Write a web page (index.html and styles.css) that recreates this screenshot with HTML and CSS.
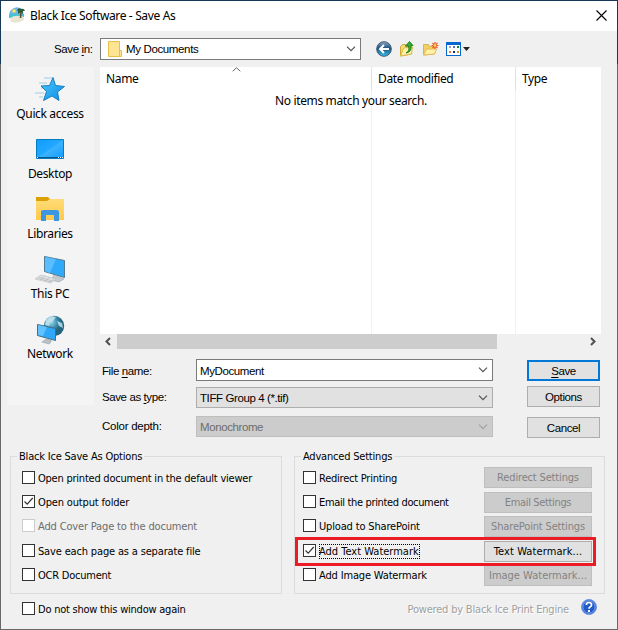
FILE: index.html
```html
<!DOCTYPE html>
<html lang="en">
<head>
<meta charset="utf-8">
<title>Black Ice Software - Save As</title>
<link rel="stylesheet" href="styles.css">
</head>
<body>
<div class="window">
  <header class="titlebar">
    <svg class="app-icon" width="16" height="16" viewBox="0 0 16 16"><path d="M2 3Q7-2 13 2l2 6H0Q0 5 2 3Z" fill="#6fb4ea"/><path d="M0 7h15v4H0Z" fill="#45c3d0"/><path d="M1 11Q7 7 15 10v3Q9 17 2 15Z" fill="#e8e5d0"/><circle cx="5" cy="4" r="1.800" fill="#f5ee4c"/><path d="M12 4l-.5 7" stroke="#604b2a" stroke-width="1.500"/><path d="M8 3Q10 0 12 2q3-1 4 2l-2 0 0 3-2-2-3 2V4Z" fill="#285d38"/></svg>
    <h1 class="title">Black Ice Software - Save As</h1>
    <svg class="close" width="11" height="11" viewBox="0 0 11 11"><path d="M.5.5l10 10M10.500.5l-10 10" stroke="#000" stroke-width="1.1"/></svg>
  </header>

  <div class="lookin">
    <label class="lookin-label"><span>Save <u>i</u>n:</span></label>
    <div class="combo combo-path">
      <svg width="14" height="16" viewBox="0 0 14 16"><path d="M.5.5h11v9h2v6H.5Z" fill="#ffe494" stroke="#e8c046"/><path d="M11.500 9.500v6" stroke="#e8c046"/></svg>
      <span>My Documents</span>
      <svg class="chev" width="10" height="6" viewBox="0 0 10 6"><path d="M1 .7l4 4 4-4" fill="none" stroke="#505050" stroke-width="1.1"/></svg>
    </div>
    <div class="tools">
      <svg width="16" height="16" viewBox="0 0 16 16"><defs><linearGradient id="bk" x2="0" y2="1"><stop stop-color="#8fa9c0"/><stop offset=".45" stop-color="#1d4f7e"/><stop offset="1" stop-color="#35c0ee"/></linearGradient></defs><circle cx="8" cy="8" r="7.300" fill="url(#bk)" stroke="#3c5974"/><path d="M13 8H4M8 4L4 8l4 4" fill="none" stroke="#fff" stroke-width="2"/></svg>
      <svg width="16" height="16" viewBox="0 0 16 16"><path d="M1.500 15V5.500l2-2h3v2h6V13Z" fill="#f6dc7a" stroke="#d1a73a"/><path d="M1.500 15l3-8 9-1-1 7Z" fill="#fff0a4" stroke="#dcb84c"/><path d="M7 12q4-2 2.500-7H6.500L10.500.5 14 4.500h-2Q13 11 7 12Z" fill="#38ad2d" stroke="#147519" stroke-width=".8"/></svg>
      <svg width="17" height="16" viewBox="0 0 17 16"><path d="M1.500 14V3.500h5l1 2h5V13Z" fill="#f1cf67" stroke="#ddb350"/><path d="M1.500 14l3-6h10l-2 5Z" fill="#fff2a5" stroke="#e2bc56"/><path d="M13 1v7M9.500 4.500h7M10.500 2l5 5M15.500 2l-5 5" stroke="#ed5a25" stroke-width="1.2"/><circle cx="13" cy="4.500" r="1.300" fill="#ffdc73"/></svg>
      <svg class="views" width="24" height="14" viewBox="0 0 24 14"><path d="M0 0h15v14H0Z" fill="#0867cf"/><path d="M1 3h13v10H1Z" fill="#fff"/><path d="M3 4h2v2H3Z" fill="#a2a2c7"/><path d="M7 4h2v2H7Z" fill="#5b70cc"/><path d="M11 4h2v2h-2Z" fill="#15822b"/><path d="M3 9h2v2H3Z" fill="#e7764d"/><path d="M7 9h2v2H7Z" fill="#132f87"/><path d="M11 9h2v2h-2Z" fill="#c39b19"/><path d="M17 5h7l-3.500 4Z" fill="#222"/></svg>
    </div>
  </div>

  <div class="browser">
    <nav class="places">
      <div class="place"><svg width="32" height="32" viewBox="0 0 32 32"><defs><linearGradient id="st" x2="1" y2="1"><stop stop-color="#53c8fa"/><stop offset="1" stop-color="#078ce6"/></linearGradient></defs><path d="M10 5h8M5 10h8M7 15h4M1 20h9M5 24h4" stroke="#86c4e8" stroke-width=".8"/><path d="M19 4.500l2.500 8 9 1-7 5.500 1.500 8.500-7-4.500-8.500 4.500 3-9-5.500-5.500 8.500-.5Z" fill="url(#st)" stroke="#157fc4"/></svg><span>Quick access</span></div>
      <div class="place"><svg width="32" height="32" viewBox="0 0 32 32"><defs><linearGradient id="ds" x2="1" y2="1"><stop stop-color="#109cff"/><stop offset=".5" stop-color="#21a8ff"/><stop offset=".51" stop-color="#3bb3ff"/><stop offset="1" stop-color="#139bff"/></linearGradient></defs><path d="M2.500 6.500h27v19h-27Z" fill="url(#ds)" stroke="#087bbf"/><path d="M3 24.500h26" stroke="#075889"/><path d="M3 24.500h1M24 24.500h1M26 24.500h1M28 24.500h1" stroke="#fff"/></svg><span>Desktop</span></div>
      <div class="place"><svg width="32" height="32" viewBox="0 0 32 32"><defs><linearGradient id="lb" x2="0" y2="1"><stop stop-color="#ffdc78"/><stop offset="1" stop-color="#ffc94a"/></linearGradient></defs><path d="M2 4h12l2 2h14v5H2Z" fill="#dca000"/><path d="M2 8h11l3-2h14v21H2Z" fill="url(#lb)"/><path d="M7 28V18l2-1h14l2 1v10h-5v-6h-8v6Z" fill="#3b97df"/></svg><span>Libraries</span></div>
      <div class="place"><svg width="32" height="32" viewBox="0 0 32 32"><path d="M10.500 3.500l20 4v17l-20-6Z" fill="#30a9fb" stroke="#507b91"/><path d="M11 4l11 2-6 14-5-2Z" fill="#59bdff"/><path d="M20 22l5 2 5 2-5 3-8-2Z" fill="#c4cbd0" stroke="#929da5" stroke-width=".5"/><path d="M7 22l15 4-5 4L1 26Z" fill="#e3e6e8" stroke="#b5babf" stroke-width=".6"/><path d="M5 24l14 4M3 25l14 4M11 23l-5 4M16 24l-5 4M20 26l-5 3" stroke="#a4abb1" stroke-width=".5"/></svg><span>This PC</span></div>
      <div class="place"><svg width="32" height="32" viewBox="0 0 32 32"><defs><radialGradient id="gl" cx=".35" cy=".3"><stop stop-color="#a6deef"/><stop offset=".6" stop-color="#3e91b2"/><stop offset="1" stop-color="#24647e"/></radialGradient></defs><circle cx="20" cy="13" r="10.200" fill="url(#gl)"/><path d="M12 7l5-4 5 1-3 4-3 1-1 4-4-1ZM23 8l5 2 1 5-4-2Z" fill="#cce9f1" opacity=".8"/><path d="M3.500 11.500l18 4v12l-18-5Z" fill="#2fa7f9" stroke="#416e84"/><path d="M4 12l9 2-4 9-5-1Z" fill="#62c1ff"/><path d="M12 26l5 1v2l-2 2-7-2Z" fill="#b9c1c6" stroke="#8b979f" stroke-width=".5"/></svg><span>Network</span></div>
    </nav>
    <section class="files">
      <div class="columns">
        <span class="col">Name<svg class="sort" width="9" height="5" viewBox="0 0 9 5"><path d="M.7 4.300l3.800-3.600 3.800 3.600" fill="none" stroke="#666"/></svg></span>
        <span class="col">Date modified</span>
        <span class="col">Type</span>
      </div>
      <div class="list"><p class="empty">No items match your search.</p></div>
      <div class="scroll">
        <svg width="17" height="15" viewBox="0 0 17 15"><path d="M10 4L6.500 7.500 10 11" fill="none" stroke="#505050" stroke-width="2"/></svg>
        <div class="thumb"></div>
        <svg width="17" height="15" viewBox="0 0 17 15"><path d="M7 4l3.500 3.500L7 11" fill="none" stroke="#505050" stroke-width="2"/></svg>
      </div>
    </section>
  </div>

  <div class="form">
    <label class="first"><span>File <u>n</u>ame:</span></label>
    <div class="combo edit"><span>MyDocument</span><svg class="chev" width="10" height="6" viewBox="0 0 10 6"><path d="M1 .7l4 4 4-4" fill="none" stroke="#505050" stroke-width="1.100"/></svg></div>
    <button class="btn primary"><span><u>S</u>ave</span></button>
    <label><span>Save as <u>t</u>ype:</span></label>
    <div class="combo gray"><span>TIFF Group 4 (*.tif)</span><svg class="chev" width="10" height="6" viewBox="0 0 10 6"><path d="M1 .7l4 4 4-4" fill="none" stroke="#505050" stroke-width="1.100"/></svg></div>
    <button class="btn options"><span>Options</span></button>
    <label class="wide"><span>Color depth:</span></label>
    <div class="combo off"><span>Monochrome</span><svg class="chev" width="10" height="6" viewBox="0 0 10 6"><path d="M1 .7l4 4 4-4" fill="none" stroke="#a0a0a0" stroke-width="1.100"/></svg></div>
    <button class="btn cancel"><span>Cancel</span></button>
  </div>

  <div class="groups">
    <section class="group saveopts">
      <h2>Black Ice Save As Options</h2>
      <div class="row"><i class="box"></i><span class="text tight">Open printed document in the default viewer</span></div>
      <div class="row"><i class="box"><svg width="11" height="11" viewBox="0 0 11 11"><path d="M1.500 5.500l2.700 2.700L9.700 2" fill="none" stroke="#333" stroke-width="1.200"/></svg></i><span class="text">Open output folder</span></div>
      <div class="row disabled"><i class="box"></i><span class="text">Add Cover Page to the document</span></div>
      <div class="row"><i class="box"></i><span class="text">Save each page as a separate file</span></div>
      <div class="row"><i class="box"></i><span class="text tight">OCR Document</span></div>
    </section>
    <section class="group advanced">
      <h2>Advanced Settings</h2>
      <div class="row"><i class="box"></i><span class="text tight">Redirect Printing</span><button class="btn high" disabled><span>Redirect Settings</span></button></div>
      <div class="row"><i class="box"></i><span class="text tighter">Email the printed document</span><button class="btn" disabled><span class="tighter">Email Settings</span></button></div>
      <div class="row"><i class="box"></i><span class="text">Upload to SharePoint</span><button class="btn" disabled><span>SharePoint Settings</span></button></div>
      <div class="row"><i class="box"><svg width="11" height="11" viewBox="0 0 11 11"><path d="M1.500 5.500l2.700 2.700L9.700 2" fill="none" stroke="#333" stroke-width="1.200"/></svg></i><span class="text focused">Add Text Watermark</span><button class="btn"><span class="loose">Text Watermark...</span></button></div>
      <div class="row"><i class="box"></i><span class="text">Add Image Watermark</span><button class="btn" disabled><span class="normal">Image Watermark...</span></button></div>
      <div class="highlight"></div>
    </section>
  </div>

  <footer class="footer">
    <div class="row"><i class="box"></i><span class="text tight">Do not show this window again</span></div>
    <span class="powered">Powered by Black Ice Print Engine</span>
    <svg class="help" width="16" height="16" viewBox="0 0 16 16"><circle cx="8" cy="8" r="7.500" fill="#2459ca" stroke="#6b98e4"/><circle cx="8" cy="8" r="6.200" fill="none" stroke="#a8c5f5" stroke-width=".7"/><path d="M5.300 6q.2-2.500 2.700-2.500T10.600 6Q10.500 7.300 9 8 8 8.500 8 9.800" fill="none" stroke="#fff" stroke-width="1.700"/><path d="M7 11h2v2H7Z" fill="#fff"/></svg>
  </footer>
</div>
</body>
</html>
```
FILE: styles.css
```css
* { box-sizing: border-box; }
body { margin: 0; font: 12px/16px "Noto Sans", sans-serif; letter-spacing: -.36px; color: #000; }
u { text-decoration: underline; text-underline-offset: 2px; }
svg { display: block; flex: none; }
span { white-space: nowrap; }
h1, h2, p { margin: 0; font: inherit; }

.window { width: 618px; height: 630px; border: 1px solid #686868; border-image: linear-gradient(#173958 64px, #686868 64px) 1; background: #f0f0f0; overflow: hidden; display: flex; flex-direction: column; }

.titlebar { height: 30px; flex: none; background: #fff; display: flex; align-items: center; padding: 0 10px 0 8px; gap: 5px; }
.app-icon { margin-bottom: 2px; }
.close { margin: 0 0 1px auto; }

.lookin { height: 36px; flex: none; display: flex; align-items: flex-start; padding-top: 7px; font: 11.5px/16px "Liberation Sans", sans-serif; }
.lookin-label { width: 99px; padding: 3px 0 0 53px; }
.combo { height: 22px; display: flex; align-items: center; border: 1px solid #7a7a7a; background: #fff; padding: 0 4px 0 3px; }
.combo-path { width: 261px; padding-left: 7px; gap: 4px; }
.chev { margin-left: auto; }
.tools { display: flex; gap: 7px; padding: 3px 0 0 15px; }
.tools .views { margin-top: 1px; }

.browser { display: flex; height: 292px; flex: none; padding-left: 6px; }
.places { width: 87px; height: 338px; background: #f4f4f4; padding-top: 6px; }
.place { height: 60px; display: flex; flex-direction: column; align-items: center; gap: 1px; padding-right: 1px; }
.files { width: 501px; height: 282px; margin-left: 6px; }
.columns { display: grid; grid-template-columns: 272px 144px 1fr; height: 24px; background: #fff; }
.col { position: relative; padding: 4px 0 0 6px; border-right: 1px solid #e2e2e2; }
.col:last-child { border: 0; }
.sort { position: absolute; left: 132px; top: 0; }
.list { height: 243px; background: linear-gradient(#e9f3fb, #e9f3fb) 271px 0/1px 100% no-repeat, linear-gradient(#e9f3fb, #e9f3fb) 415px 0/1px 100% no-repeat, #fff; }
.empty { text-align: center; padding: 2px 0 0 1px; }
.scroll { display: flex; height: 15px; }
.thumb { width: 380px; background: #cdcdcd; margin-right: auto; }

.form { height: 84px; flex: none; display: grid; grid-template: 28px 29px 27px / 95px 297px 107px; align-items: start; padding-left: 100px; font: 11.5px/16px "Liberation Sans", sans-serif; letter-spacing: -.4px; }
.form label { padding: 2px 0 0 1px; }
.form .first { padding-top: 4px; }
.form .wide { letter-spacing: -.25px; }
.form .btn { margin-left: 34px; }
.edit span { padding-top: 1px; }
.form .gray, .form .off { height: 21px; }
.form .gray { background: #e1e1e1; border-color: #adadad; }
.form .off { background: #ccc; border-color: #bfbfbf; color: #6d6d6d; }
.btn { height: 21px; padding: 0; border: 1px solid #adadad; border-radius: 0; background: #e1e1e1; font: inherit; letter-spacing: inherit; color: #000; display: flex; align-items: center; justify-content: center; }
.btn:disabled { background: #ccc; border-color: #bfbfbf; color: #838383; }
.btn.primary { border: 2px solid #0078d7; margin-top: 1px; }
.btn.options { margin-top: -1px; }
.btn.cancel { margin-top: 1px; }

.groups, .footer { font: 11px/16px "DejaVu Sans Condensed", "DejaVu Sans", sans-serif; letter-spacing: -.16px; }
.groups { display: flex; gap: 12px; height: 138px; flex: none; padding-left: 9px; margin-top: 13px; }
.group { position: relative; border: 1px solid #dcdcdc; height: 138px; }
.group h2 { position: absolute; top: -8px; left: 6px; background: #f0f0f0; padding: 0 2px; letter-spacing: -.2px; }
.saveopts { width: 272px; padding: 9px 0 0 11px; }
.advanced { width: 311px; padding: 9px 0 0 8px; }
.row { display: flex; align-items: center; height: 24px; }
.row:nth-of-type(4) { height: 25px; padding-top: 1px; }
.text { padding-top: 2px; }
.tight { letter-spacing: -.23px; }
.tighter { letter-spacing: -.35px; }
.normal { letter-spacing: 0; }
.loose { letter-spacing: .1px; }
.box { width: 13px; height: 13px; border: 1px solid #333; background: #fff; margin: 0 3px 1px 0; flex: none; }
.disabled { color: #6d6d6d; }
.disabled .box { border-color: #ccc; }
.advanced .btn { width: 108px; margin: 1px 12px 0 auto; }
.advanced .high { margin: 0 12px 1px auto; }
.focused { line-height: 14px; padding: 1px 1px 0 0; letter-spacing: 0; outline: 1px dotted #000; outline-offset: -1px; }
.highlight { position: absolute; left: 0; top: 80px; width: 301px; height: 29px; border: 3px solid #ec1c24; }

.footer { display: flex; align-items: flex-start; padding: 3px 20px 0 21px; }
.powered { margin: 5px 12px 0 auto; color: #a0a0a0; text-shadow: 1px 1px #fff; letter-spacing: -.19px; }
.help { margin-top: 2px; }
```
